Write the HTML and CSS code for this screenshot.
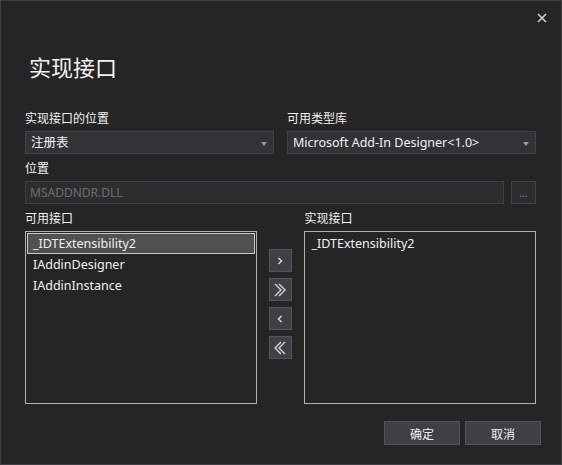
FILE: index.html
```html
<!DOCTYPE html>
<html lang="zh-CN">
<head>
<meta charset="utf-8">
<link rel="stylesheet" href="styles.css">
</head>
<body>
<div class="dialog">
  <button class="close" aria-label="关闭">
    <svg width="10" height="10" viewBox="0 0 10 10"><path d="M1 1 L9 9 M9 1 L1 9" stroke="#cfcfcf" stroke-width="1.6"/></svg>
  </button>
  <h1 class="title">实现接口</h1>
  <div class="fields">
    <div class="field">
      <div class="label">实现接口的位置</div>
      <div class="combo"><span>注册表</span><span class="arrow"></span></div>
    </div>
    <div class="field">
      <div class="label">可用类型库</div>
      <div class="combo"><span>Microsoft Add-In Designer&lt;1.0&gt;</span><span class="arrow"></span></div>
    </div>
  </div>
  <div class="label loc-label">位置</div>
  <div class="path-row">
    <div class="textbox">MSADDNDR.DLL</div>
    <div class="browse">…</div>
  </div>
  <div class="lists">
    <div class="list-col">
      <div class="label list-label">可用接口</div>
      <div class="list">
        <div class="item selected">_IDTExtensibility2</div>
        <div class="item">IAddinDesigner</div>
        <div class="item">IAddinInstance</div>
      </div>
    </div>
    <div class="movers">
      <div class="mv"><svg width="8" height="10" viewBox="0 0 8 10"><path d="M2.5 2 L5.5 5 L2.5 8" fill="none" stroke="#d8d8d8" stroke-width="1.5"/></svg></div>
      <div class="mv"><svg width="14" height="16" viewBox="0 0 14 16"><path d="M2 2 L8 8 L2 14 M6 2 L12 8 L6 14" fill="none" stroke="#d8d8d8" stroke-width="1.4"/></svg></div>
      <div class="mv"><svg width="8" height="10" viewBox="0 0 8 10"><path d="M5.5 2 L2.5 5 L5.5 8" fill="none" stroke="#d8d8d8" stroke-width="1.5"/></svg></div>
      <div class="mv"><svg width="14" height="16" viewBox="0 0 14 16"><path d="M12 2 L6 8 L12 14 M8 2 L2 8 L8 14" fill="none" stroke="#d8d8d8" stroke-width="1.4"/></svg></div>
    </div>
    <div class="list-col right">
      <div class="label list-label">实现接口</div>
      <div class="list">
        <div class="item">_IDTExtensibility2</div>
      </div>
    </div>
  </div>
  <div class="actions">
    <button class="btn">确定</button>
    <button class="btn">取消</button>
  </div>
</div>
</body>
</html>
```
FILE: styles.css
```css
* { box-sizing: border-box; }
html, body { margin: 0; padding: 0; background: #252526; }
body {
  font-family: "Noto Sans", "Noto Sans CJK SC", sans-serif;
  font-size: 12px;
  color: #f1f1f1;
}
.dialog {
  position: relative;
  width: 562px;
  height: 465px;
  border: 1px solid #3f3f46;
  background: #252526;
  padding: 50px 25px 0 24px;
}
.close {
  position: absolute;
  top: 10px;
  right: 12px;
  width: 14px;
  height: 14px;
  padding: 0;
  border: 0;
  background: transparent;
  display: flex;
  align-items: center;
  justify-content: center;
}
.title {
  margin: 0;
  font-family: "Noto Sans CJK SC", sans-serif;
  font-weight: 400;
  font-size: 22px;
  line-height: 30px;
  height: 30px;
  padding-left: 4px;
  color: #f1f1f1;
}
.fields {
  margin-top: 29px;
  display: grid;
  grid-template-columns: 249px 249px;
  column-gap: 13px;
}
.label {
  font-family: "Noto Sans CJK SC", sans-serif;
  line-height: 16px;
  height: 16px;
  margin-bottom: 5px;
}
.combo {
  height: 23px;
  border: 1px solid #434346;
  background: #333337;
  display: flex;
  align-items: center;
  justify-content: space-between;
  padding: 0 6px 0 5px;
  font-size: 12.5px;
}
.combo span:first-child { line-height: 20px; }
.arrow {
  width: 0; height: 0;
  border-left: 3.5px solid transparent;
  border-right: 3.5px solid transparent;
  border-top: 4px solid #9a9a9a;
  margin-top: 2px;
}
.loc-label { margin-top: 6px; }
.path-row {
  display: flex;
  gap: 7px;
}
.textbox {
  width: 481px;
  height: 23px;
  border: 1px solid #3f3f46;
  background: #2d2d30;
  color: #6d6d6d;
  padding: 0 4px;
  line-height: 21px;
}
.browse {
  width: 25px;
  height: 23px;
  border: 1px solid #434346;
  background: #2d2d30;
  color: #8a8a8a;
  font-size: 10px;
  text-align: center;
  line-height: 22px;
}
.lists {
  margin-top: 6px;
  display: flex;
  align-items: flex-start;
}
.list-col { width: 232px; }
.list-col.right { width: 233px; }
.list-label { margin-bottom: 5px; }
.list-col.right .list-label { padding-left: 1px; }
.list {
  height: 173px;
  border: 1px solid #b0b0b0;
  padding: 1px;
}
.item {
  height: 21px;
  line-height: 20px;
  padding-left: 5px;
  font-size: 12.5px;
  border: 1px solid transparent;
}
.item.selected {
  background: #505050;
  border-color: #c8c8c8;
}
.list-col.right .item { padding-left: 5px; }
.movers {
  width: 23px;
  margin: 39px 12px 0 12px;
  display: flex;
  flex-direction: column;
  gap: 6px;
}
.mv {
  width: 23px;
  height: 23px;
  background: #3f3f46;
  border: 1px solid #555558;
  display: flex;
  align-items: center;
  justify-content: center;
}
.actions {
  margin-top: 17px;
  margin-right: -5px;
  display: flex;
  justify-content: flex-end;
  gap: 5px;
}
.btn {
  width: 76px;
  height: 24px;
  background: #3f3f46;
  border: 1px solid #555558;
  color: #f1f1f1;
  font-family: "Noto Sans CJK SC", sans-serif;
  font-size: 12px;
  padding: 0;
}
```
